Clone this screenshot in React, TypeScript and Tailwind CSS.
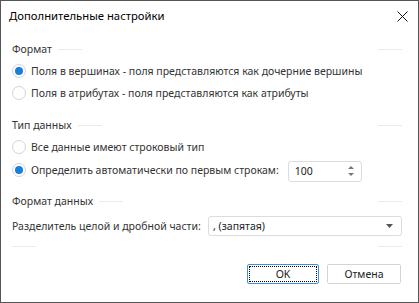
import React from "react";

const font = { fontFamily: '"Noto Sans", "Open Sans", sans-serif' };

function Radio({ checked }: { checked?: boolean }) {
  return (
    <span className="flex h-[14px] w-[14px] shrink-0 items-center justify-center rounded-full border border-[#d4d4d4] bg-white">
      {checked && <span className="h-[8px] w-[8px] rounded-full bg-[#1a7fd8]" />}
    </span>
  );
}

function SectionHeader({ title }: { title: string }) {
  return (
    <div className="flex h-[18px] items-center">
      <span className="whitespace-nowrap text-[10.5px] leading-none text-[#333]">{title}</span>
      <span className="ml-[6px] h-px w-[24px] bg-[#ebebeb]" />
      <span className="flex-1" />
      <span className="h-px w-[24px] bg-[#ebebeb]" />
    </div>
  );
}

function RadioRow({ label, checked }: { label: string; checked?: boolean }) {
  return (
    <label className="flex h-[18px] items-center gap-[5px]">
      <Radio checked={checked} />
      <span className="whitespace-nowrap text-[10.5px] leading-none text-[#333]">{label}</span>
    </label>
  );
}

export default function App() {
  return (
    <div className="h-[303px] w-[419px] overflow-hidden border border-[#555] bg-white" style={font}>
      <div className="flex h-[30px] items-center justify-between pl-[8px] pr-[10px]">
        <span className="whitespace-nowrap text-[11.3px] text-black">Дополнительные настройки</span>
        <svg width="11" height="11" viewBox="0 0 11 11" className="mt-[1px]">
          <path d="M0.5 0.5 L10.5 10.5 M10.5 0.5 L0.5 10.5" stroke="#111" strokeWidth="1" />
        </svg>
      </div>

      <div className="flex flex-col pl-[11px] pr-[16px] pt-[9px]">
        <SectionHeader title="Формат" />
        <div className="mt-[4px] flex flex-col gap-[4px]">
          <RadioRow checked label="Поля в вершинах - поля представляются как дочерние вершины" />
          <RadioRow label="Поля в атрибутах - поля представляются как атрибуты" />
        </div>

        <div className="mt-[14px]">
          <SectionHeader title="Тип данных" />
        </div>
        <div className="mt-[4px] flex flex-col gap-[4px]">
          <RadioRow label="Все данные имеют строковый тип" />
          <div className="flex h-[22px] items-center">
            <label className="-mt-[2px] flex items-center gap-[5px]">
              <Radio checked />
              <span className="whitespace-nowrap text-[10.5px] leading-none text-[#333]">
                Определить автоматически по первым строкам:
              </span>
            </label>
            <div className="ml-[9px] flex h-[21px] w-[74px] items-center justify-between rounded-[3px] border border-[#dcdcdc] pl-[6px] pr-[7px]">
              <span className="text-[10.5px] leading-none text-[#222]">100</span>
              <svg width="6" height="12" viewBox="0 0 6 12">
                <path d="M3 1 L6 4 L0 4 Z" fill="#777" />
                <path d="M0 8 L6 8 L3 11 Z" fill="#777" />
              </svg>
            </div>
          </div>
        </div>

        <div className="mt-[10px]">
          <SectionHeader title="Формат данных" />
        </div>
        <div className="mt-[6px] flex h-[20px] items-center">
          <span className="whitespace-nowrap text-[10.5px] leading-none text-[#333]">
            Разделитель целой и дробной части:
          </span>
          <div className="ml-auto flex h-[20px] w-[194px] items-center justify-between rounded-[3px] border border-[#dcdcdc] pl-[4px] pr-[8px]">
            <span className="whitespace-nowrap text-[10.5px] leading-none text-[#222]">, (запятая)</span>
            <svg width="7" height="4" viewBox="0 0 7 4">
              <path d="M0 0 L7 0 L3.5 4 Z" fill="#555" />
            </svg>
          </div>
        </div>

        <div className="mt-[10px] flex h-px">
          <span className="h-px w-[24px] bg-[#ebebeb]" />
          <span className="flex-1" />
          <span className="h-px w-[24px] bg-[#ebebeb]" />
        </div>

        <div className="mt-[17px] flex justify-end gap-[8px] pr-px">
          <button className="flex h-[20px] w-[72px] items-center justify-center rounded-[2px] border border-[#3d94dc] p-px">
            <span className="flex h-full w-full items-center justify-center border border-dotted border-black text-[10.5px] leading-none text-[#222]">
              OK
            </span>
          </button>
          <button className="flex h-[20px] w-[74px] items-center justify-center rounded-[2px] border border-[#d4d4d4] text-[10.5px] leading-none text-[#222]">
            Отмена
          </button>
        </div>
      </div>
    </div>
  );
}
